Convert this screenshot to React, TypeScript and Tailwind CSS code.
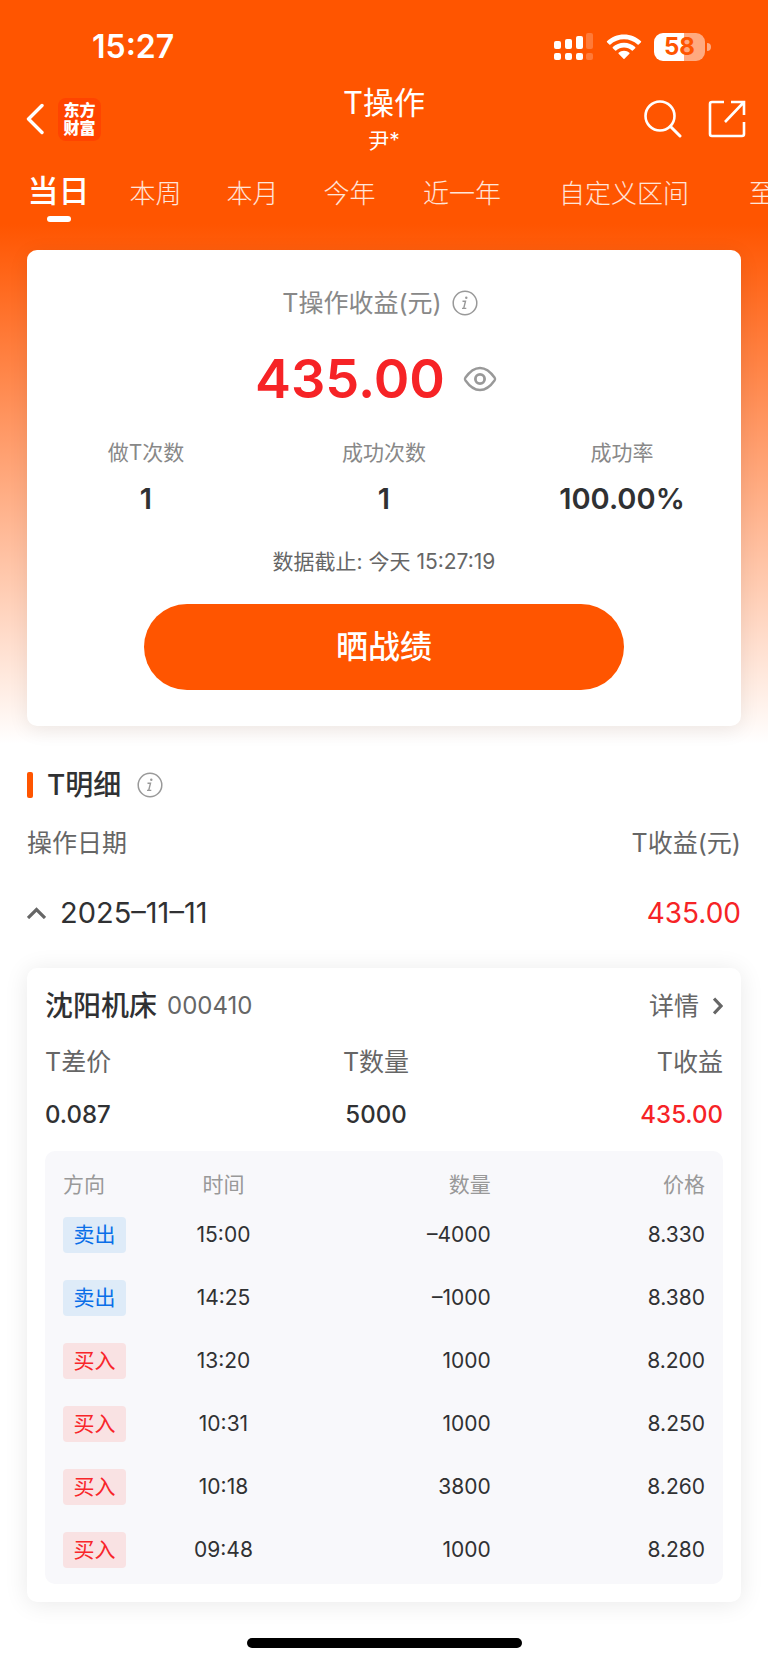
import React, { useState } from 'react';
import { clsx } from 'clsx';

const TABS = [
  { label: '当日', width: 'w-[97px]' },
  { label: '本周', width: 'w-[97px]' },
  { label: '本月', width: 'w-[97px]' },
  { label: '今年', width: 'w-[97px]' },
  { label: '近一年', width: 'w-32' },
  { label: '自定义区间', width: 'w-[196px]' },
  { label: '至今', width: 'w-[106px]' },
];

const STATS = [
  { label: '做T次数', value: '1' },
  { label: '成功次数', value: '1' },
  { label: '成功率', value: '100.00%' },
];

const TRADES = [
  { side: 'sell', time: '15:00', amount: '–4000', price: '8.330' },
  { side: 'sell', time: '14:25', amount: '–1000', price: '8.380' },
  { side: 'buy', time: '13:20', amount: '1000', price: '8.200' },
  { side: 'buy', time: '10:31', amount: '1000', price: '8.250' },
  { side: 'buy', time: '10:18', amount: '3800', price: '8.260' },
  { side: 'buy', time: '09:48', amount: '1000', price: '8.280' },
];

const SignalIcon = () => (
  <svg width="40" height="28" viewBox="0 0 40 28" fill="#fff">
    <rect x="0" y="8" width="7" height="8" rx="2" />
    <rect x="11" y="6" width="7" height="10" rx="2" />
    <rect x="22" y="3" width="7" height="13" rx="2" />
    <rect x="32" y="0" width="7" height="16" rx="2" opacity=".22" />
    <rect x="0" y="20" width="7" height="7" rx="2" />
    <rect x="11" y="20" width="7" height="7" rx="2" />
    <rect x="22" y="20" width="7" height="7" rx="2" />
    <rect x="32" y="20" width="7" height="7" rx="2" opacity=".22" />
  </svg>
);

const WifiIcon = () => (
  <svg width="36" height="26" viewBox="0 0 36 26" fill="#fff">
    <path d="M18 0.5C24.6 0.5 30.6 3 35 7.2c.3.3.3.8 0 1.100l-2.300 2.300c-.3.3-.8.3-1.100 0C28 7.200 23.200 5.300 18 5.300S8 7.200 4.400 10.600c-.3.3-.8.3-1.100 0L1 8.300c-.3-.3-.3-.8 0-1.100C5.400 3 11.400.5 18 .5Z" />
    <path d="M18 8.700c4.300 0 8.300 1.700 11.200 4.400.3.3.3.8 0 1.100l-2.400 2.300c-.3.3-.7.3-1 0-2-1.900-4.800-3-7.800-3s-5.800 1.100-7.800 3c-.3.3-.7.3-1 0l-2.400-2.300c-.3-.3-.3-.8 0-1.100C9.700 10.400 13.700 8.700 18 8.700Z" />
    <path d="M18 16.800c2.100 0 4 .8 5.400 2 .3.3.3.7 0 1l-4.900 5c-.3.3-.7.3-1 0l-4.900-5c-.3-.3-.3-.7 0-1 1.400-1.200 3.300-2 5.400-2Z" />
  </svg>
);

const Battery = () => (
  <div className="flex items-center gap-0.5">
    <div className="flex h-7 w-[51px] items-center justify-center rounded-[9px] bg-[linear-gradient(to_right,#fff_58%,#ffaa80_58%)] text-[24px] font-bold leading-7 text-[#ff5500]">
      58
    </div>
    <div className="h-2 w-1 rounded-r-full bg-[#ffaa80]" />
  </div>
);

const InfoIcon = () => (
  <svg width="26" height="26" viewBox="0 0 26 26" fill="none" stroke="#999" strokeWidth="1.500">
    <circle cx="13" cy="13" r="11.800" />
    <path d="M10.500 11.200h3l-1.800 7.200h2.600M10 18.400h2" strokeWidth="1.400" />
    <circle cx="14.300" cy="7.800" r="1.200" fill="#999" stroke="none" />
  </svg>
);

const EyeIcon = () => (
  <svg width="34" height="26" viewBox="0 0 34 26" fill="none" stroke="#999" strokeWidth="2.400" strokeLinejoin="round">
    <path d="M2.300 11.800C6.500 5.800 11.500 2 17 2s10.500 3.800 14.700 9.800c.5.800.5 1.600 0 2.400C27.500 20.200 22.500 24 17 24S6.500 20.200 2.300 14.200c-.5-.8-.5-1.600 0-2.400Z" />
    <circle cx="17" cy="13" r="4.600" strokeWidth="2.800" />
  </svg>
);

const SideTag = ({ side }: { side: string }) => (
  <span
    className={clsx(
      'block h-9 w-[63px] rounded-[4px] text-center text-[21px] leading-9',
      side === 'sell' ? 'bg-[#deebf8] text-[#0a6fe8]' : 'bg-[#f9e2e3] text-[#f8262a]'
    )}
  >
    {side === 'sell' ? '卖出' : '买入'}
  </span>
);

export default function App() {
  const [activeTab, setActiveTab] = useState('当日');
  const [isHidden, setIsHidden] = useState(false);
  const [isOpen, setIsOpen] = useState(true);

  return (
    <div className="overflow-hidden bg-[linear-gradient(to_bottom,#ff5500_224px,#ffffff_744px)] font-['Inter','Noto_Sans_CJK_SC',sans-serif] text-[#303133]">
      {/* Status bar */}
      <div className="flex h-[85px] items-center justify-between pl-[92px] pr-[57px] pt-2 text-white">
        <span className="text-[32px] font-semibold leading-10">15:27</span>
        <div className="flex items-center gap-3">
          <SignalIcon />
          <WifiIcon />
          <Battery />
        </div>
      </div>

      {/* Header */}
      <header className="grid grid-cols-3 items-center px-[22px] text-white">
        <div className="flex items-center gap-3.5 pl-1">
          <button aria-label="返回">
            <svg width="18" height="32" viewBox="0 0 18 32" fill="none" stroke="#fff" strokeWidth="3.400" strokeLinecap="round" strokeLinejoin="round">
              <path d="M16 2.500 2.500 16 16 29.500" />
            </svg>
          </button>
          <div className="flex h-[43px] w-[43px] flex-col items-center justify-center rounded-lg bg-[#ff4400] text-[16px] font-black leading-[18px]">
            <span>东方</span>
            <span>财富</span>
          </div>
        </div>
        <div className="text-center">
          <h1 className="text-[31px] font-normal leading-9">T操作</h1>
          <p className="mt-2 text-[21px] leading-6">尹*</p>
        </div>
        <div className="flex justify-end gap-[26px]">
          <button aria-label="搜索">
            <svg width="38" height="38" viewBox="0 0 38 38" fill="none" stroke="#fff" strokeWidth="2.600" strokeLinecap="round">
              <circle cx="16" cy="16" r="14.500" />
              <path d="m26.500 26.500 9.500 9.500" strokeWidth="3" />
            </svg>
          </button>
          <button aria-label="分享">
            <svg width="38" height="38" viewBox="0 0 38 38" fill="none" stroke="#fff" strokeWidth="2.600" strokeLinejoin="round">
              <path d="M16 2H4a2 2 0 0 0-2 2v30a2 2 0 0 0 2 2h30a2 2 0 0 0 2-2V22" />
              <path d="M23 2h13v13M36 2 17 22" strokeLinejoin="miter" />
            </svg>
          </button>
        </div>
      </header>

      {/* Range tabs */}
      <nav className="flex h-[97px] items-start overflow-hidden pl-2.5 pt-4">
        {TABS.map((tab) => (
          <button
            key={tab.label}
            onClick={() => setActiveTab(tab.label)}
            className={clsx('flex shrink-0 flex-col items-center', tab.width)}
          >
            {activeTab === tab.label ? (
              <>
                <span className="text-[31px] font-medium leading-[44px] text-white">{tab.label}</span>
                <span className="mt-[3px] h-1.5 w-6 rounded-full bg-white" />
              </>
            ) : (
              <span className="text-[26px] font-light leading-[50px] text-white/85">{tab.label}</span>
            )}
          </button>
        ))}
      </nav>

      <main className="px-[27px]">
        {/* Summary */}
        <section className="rounded-[10px] bg-white pb-9 pt-[37px] text-center shadow-[0_4px_20px_rgba(0,0,0,0.08)]">
          <div className="flex items-center justify-center gap-2.5 pr-2 text-[25px] leading-8 text-[#888]">
            <span>T操作收益(元)</span>
            <InfoIcon />
          </div>
          <div className="mt-7 flex items-center justify-center gap-[18px] pr-4">
            <span className="text-[54px] font-semibold leading-[64px] text-[#f62326]">{isHidden ? '****' : '435.00'}</span>
            <button aria-label="显示或隐藏收益" onClick={() => setIsHidden(!isHidden)}>
              <EyeIcon />
            </button>
          </div>
          <dl className="mt-[26px] grid grid-cols-3">
            {STATS.map((stat) => (
              <div key={stat.label}>
                <dt className="text-[21px] leading-8 text-[#888]">{stat.label}</dt>
                <dd className="mt-2.5 text-[29px] font-semibold leading-10">{stat.value}</dd>
              </div>
            ))}
          </dl>
          <p className="mt-[27px] text-[21px] leading-8 text-[#666]">数据截止: 今天 15:27:19</p>
          <button className="mt-[26px] h-[86px] w-[480px] max-w-full rounded-full bg-[#ff5500] text-[32px] font-medium text-white">
            晒战绩
          </button>
        </section>

        {/* Detail list */}
        <div className="mt-[39px] flex items-center">
          <span className="h-[26px] w-1.5 rounded-[2px] bg-[#ff5500]" />
          <h2 className="ml-3.5 text-[28px] font-medium leading-10">T明细</h2>
          <button className="ml-4" aria-label="T明细说明">
            <InfoIcon />
          </button>
        </div>
        <div className="mt-[22px] flex justify-between text-[25px] leading-8 text-[#666]">
          <span>操作日期</span>
          <span>T收益(元)</span>
        </div>
        <button
          onClick={() => setIsOpen(!isOpen)}
          className="mt-[34px] flex w-full items-center justify-between text-[29px] leading-10"
        >
          <span className="flex items-center gap-3.5">
            <svg width="19" height="12" viewBox="0 0 19 12" fill="none" stroke="#666" strokeWidth="3.200" className={clsx(!isOpen && 'rotate-180')}>
              <path d="m1 11 8.500-8.500L18 11" />
            </svg>
            2025–11–11
          </span>
          <span className="text-[28px] text-[#f62326]">435.00</span>
        </button>

        {isOpen && (
          <section className="mt-[35px] rounded-[10px] bg-white p-[18px] shadow-[0_2px_24px_rgba(0,0,0,0.09)]">
            <div className="flex items-center justify-between">
              <h3 className="flex items-center gap-2.5 text-[28px] font-medium leading-10">
                沈阳机床
                <span className="text-[24px] font-normal text-[#666]">000410</span>
              </h3>
              <a href="#detail" className="flex items-center gap-3.5 text-[25px] leading-8 text-[#666]">
                详情
                <svg width="10" height="18" viewBox="0 0 10 18" fill="none" stroke="#666" strokeWidth="3.200">
                  <path d="m1 1.500 7 7.500-7 7.500" />
                </svg>
              </a>
            </div>
            <dl className="mt-5 grid grid-cols-[110fr_110fr_118fr] text-[25px] leading-8">
              <div>
                <dt className="text-[#666]">T差价</dt>
                <dd className="mt-[21px] text-[24px] font-medium">0.087</dd>
              </div>
              <div className="text-center">
                <dt className="text-[#666]">T数量</dt>
                <dd className="mt-[21px] text-[24px] font-medium">5000</dd>
              </div>
              <div className="text-right">
                <dt className="text-[#666]">T收益</dt>
                <dd className="mt-[21px] text-[24px] font-medium text-[#f62326]">435.00</dd>
              </div>
            </dl>

            <div className="mt-5 rounded-[10px] bg-[#f8f8fb] px-[18px] pb-[3px] pt-4">
              <table className="w-full table-fixed text-[21px]">
                <thead>
                  <tr className="h-9 leading-8 text-[#999]">
                    <th className="w-[15%] p-0 text-left font-normal">方向</th>
                    <th className="w-[20%] p-0 text-center font-normal">时间</th>
                    <th className="w-[203px] p-0 text-right font-normal">数量</th>
                    <th className="p-0 text-right font-normal">价格</th>
                  </tr>
                </thead>
                <tbody>
                  {TRADES.map((trade) => (
                    <tr key={trade.time} className="h-[63px]">
                      <td className="p-0">
                        <SideTag side={trade.side} />
                      </td>
                      <td className="p-0 text-center">{trade.time}</td>
                      <td className="p-0 text-right">{trade.amount}</td>
                      <td className="p-0 text-right">{trade.price}</td>
                    </tr>
                  ))}
                </tbody>
              </table>
            </div>
          </section>
        )}
      </main>

      {/* Home indicator */}
      <div className="mx-auto mb-3.5 mt-9 h-2.5 w-[275px] rounded-full bg-black" />
    </div>
  );
}
